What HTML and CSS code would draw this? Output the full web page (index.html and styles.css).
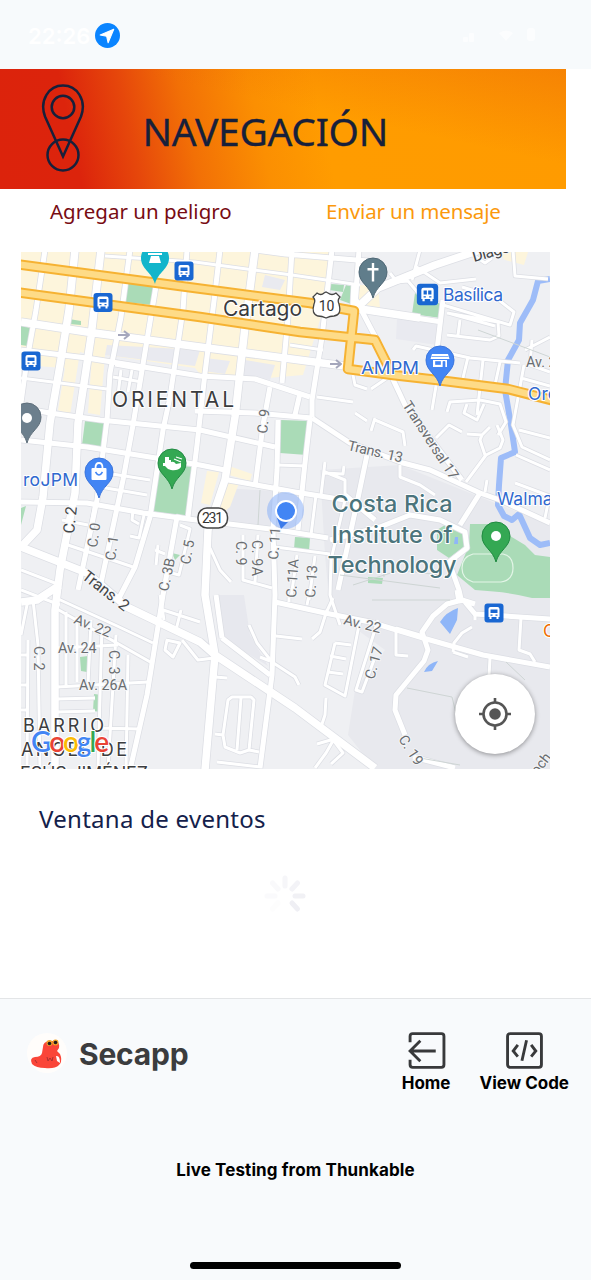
FILE: index.html
```html
<!DOCTYPE html>
<html lang="es">
<head>
<meta charset="utf-8">
<title>Secapp</title>
<link rel="stylesheet" href="styles.css">
</head>
<body>
<div class="app">
  <div class="status">
    <span class="time">22:26</span>
    <svg class="loc" viewBox="0 0 24 24"><circle cx="12" cy="12" r="12" fill="#0a84ff"/><path d="M18 6 5 11.600l6.200 1.200L12.600 19z" fill="#fff" stroke="#fff" stroke-linejoin="round"/></svg>
    <svg class="signals" viewBox="0 0 90 20" fill="#fff"><rect x="6" y="11" width="5" height="5" rx="1"/><rect x="12" y="7" width="5" height="9" rx="1"/><path d="M42 7q7-5 14 0l-7 8z"/><rect x="70" y="2" width="8" height="13" rx="3"/></svg>
  </div>
  <header class="hero">
    <svg class="route" viewBox="0 0 44 90" fill="none" stroke="#17203b" stroke-width="2.500"><path d="M22 73.500 4 33.500C-2 17 8 2.500 22 2.500S46 17 40 33.500z"/><circle cx="22" cy="24" r="11.300"/><circle cx="22" cy="72" r="15.500"/></svg>
    <h1 class="title">NAVEGACIÓN</h1>
  </header>
  <nav class="actions"><a class="danger">Agregar un peligro</a><a class="message">Enviar un mensaje</a></nav>

  <div class="map">
  <svg class="mapsvg" viewBox="21 252 529 517">
    <defs>
      <g id="minor">
        <path d="M21 378 107 389M105 256 195 262 292 275 360 285M87 470 150 480M100 487 147 495M115 365 143 370M113 377 142 382M121 370 118 395M132 370 128 392M290 345 323 350M277 465 306 466M275 547 330 554M345 500 345 480 325 472M325 462 321 495M325 473 343 474 344 466M316 495 311 535M345 500 331 560 330 595 340 625M353 375 355 385 367 389M317 397 353 402M355 413 367 421"/>
        <path d="M243 535 243 580 272 588M258 535 255 582M297 555 291 598M315 556 309 600M210 548 220 570 231 582M180 525 190 529 179 575 168 572M158 545 156 565M155 550 165 554M133 510 132 520 139 524M144 515 139 538 130 536M62 520 88 525M62 543 136 568M95 502 85 560"/>
        <path d="M21 590 60 605M21 570 60 585M28 600 21 635M33 600 38 645 40 769M28 640 27 769M21 655 28 655M21 685 28 685M21 710 28 710M56 598 115 625 153 643M57 609 152 663M57 648 118 645M57 687 148 682M57 699 95 698M57 712 95 711M100 728 140 729M66 612 66 685M77 617 77 682M91 620 88 685M102 625 98 769M116 635 108 769M128 655 126 769"/>
        <path d="M160 609 200 622M181 610 176 630M160 595 164 620M166 640 180 643 173 657 165 650 167 640M182 640 198 660 214 658M215 677 227 678M215 734 223 735 228 700 232 697 251 697 254 700 249 750 240 753 225 747 223 735M241 698 237 750M249 750 259 752M217 762 261 767"/>
        <path d="M276 636 302 639M249 625 257 643 272 662 295 677 299 685M260 657 270 661M327 610 320 632 312 639M333 598 326 613M335 643 351 645M335 643 325 685 345 696 360 620M330 656 346 659M328 672 343 674M326 698 325 715 320 730M378 620 356 690 362 692 374 660M317 744 334 739 326 753 315 768M334 741 343 753 331 764M289 602 289 597M307 605 309 595"/>
        <path d="M396 627 396 655 408 656M420 635 396 628M453 652 454 643 462 633 472 627M453 652 468 657M521 618 519 650 530 654 535 662M475 615 475 620M490 658 489 676"/>
        <path d="M390 273 397 282 408 281 424 300M415 266 440 283 476 279M470 253 485 263 492 258M513 250 515 276 548 279M443 305 510 325 514 312 495 297 462 287M448 313 495 326M447 335 490 340 499 336 498 322 447 313M460 320 458 335M420 250 412 280M413 350 416 346 470 358 520 363M468 357 462 382M483 360 477 415M500 362 495 385M437 380 432 410M447 412 450 402 480 400 500 404 506 422 498 435M467 404 464 413 477 420 484 404M532 340 530 365 550 372M525 350 550 337M524 365 513 425 522 447 550 460M521 378 550 386M519 430 550 438M516 455 550 470M371 389 399 370M375 420 403 432 405 446M371 431 375 418M436 438 449 425 462 432M467 434 482 435 490 427M497 425 503 440 500 448 486 455 466 482M485 455 480 440 482 435M487 480 485 492M515 483 550 496M549 498 545 518M400 465 400 477 420 485 435 495M550 400 530 397"/>
      </g>
      <g id="major">
        <path d="M45 250 36 310 27 360 20 410M130 250 121 317 110 373 107 420 97 500 78 590M157 280 147 340 133 425 123 480 101 583M187 250 183 310 170 397 163 430 150 517 135 567 118 600M220 250 215 293 205 373 197 445 188 517M292 250 288 317 282 383M270 387 263 425 255 487M332 250 322 337 312 400 312 417M300 393 295 415M310 420 305 463 298 530M359 250 355 305M255 250 285 254 380 262"/>
        <path d="M21 350 87 358 200 376 255 379 310 397M21 408 50 413 100 420 200 430 275 447M195 411 255 413 312 418M21 440 87 447 200 465 225 470M21 502 87 503 143 513 188 519 278 530 328 538M228 480 295 492 345 500M188 519 177 517 163 595 147 695 130 770M312 418 350 443 403 463 430 470 480 493 500 500 550 523M278 420 277 470 273 530 275 595 272 675 260 768M222 638 270 675M216 595 222 638M275 602 325 613 345 617 370 622 423 638 483 655 550 667M443 300 437 350M370 311 442 322M480 493 460 525M330 540 380 527 410 515 440 520 465 532 467 548 449 562 459 590 462 603M375 520 345 495M367 455 358 498 338 590M475 604 462 600 447 604 433 616 422 632 428 650 424 661 396 695 395 710 405 735M413 757 455 768M457 590 459 602M465 602 475 614 550 619M390 373 405 405 462 480M356 300 378 342"/>
      </g>
      <g id="arterial">
        <path d="M75 250 69 310 60 365 50 423 43 497 37 530 21 547M101 250 91 337 78 423 75 493 60 570 55 610 55 769M255 250 245 327 235 417 225 480 208 530 205 595 215 655 205 770M21 322 87 332 200 347 345 366M21 547 87 573 127 607 200 642 215 655 295 708 375 768M360 305 378 288 435 265 480 250M355 285 354 308 420 318M21 602 37 600 60 585"/>
      </g>
      <g id="highway"><path d="M15 264 195 288 310 303 354 311 348 369 393 375 437 380 508 389 555 401M15 292 200 317 300 332 375 340 392 374"/></g>
      <path id="pin" d="M0 26C-3 14-14 11-14 0a14 14 0 0 1 28 0C14 11 3 14 0 26z"/>
      <g id="bus"><rect x="-9.500" y="-9.500" width="19" height="19" rx="3" fill="#1967d2"/><path d="M-5.500-4q0-2 2-2h7q2 0 2 2v8h-1v2h-2v-2h-5v2h-2v-2h-1z" fill="#fff"/><path d="M-3.500-3.500h7v3.500h-7zM-3.500 1.500h2v1.200h-2zM1.500 1.500h2v1.200h-2z" fill="#1967d2"/></g>
    </defs>
    <rect x="21" y="252" width="529" height="517" fill="#eff0f3"/>
    <path d="M320 470 400 465 550 525V769H375L348 735 355 690 385 650 330 610 325 555z" fill="#e8e9ee"/>
    <path d="M222 488 276 491 274 530 217 522zM218 595 244 595 250 635 268 666 225 640z" fill="#e7e8ee"/>
    <path d="M21 252H330L320 320 303 375 268 378 203 378 195 368 105 355 100 415 88 413 92 355 80 352 70 415 58 410 65 368 21 365zM360 285 378 286 380 308 357 303zM207 471 219 472 210 505 201 503zM225 479 239 483 230 507 217 518zM229 466 252 474 250 481 229 475zM498 252H528L524 265 505 260z" fill="#fdf5dc"/>
    <path d="M107 345 200 350 195 366 105 355zM265 275 285 280 280 290 262 287zM205 358 230 361 225 374 203 371zM245 360 275 365 270 380 243 376zM397 318 440 324 437 345 396 339z" fill="#e9eaf0"/>
    <path d="M128 282 153 286 152 305 125 302zM69 319 81 321 81 325 69 324zM21 325 30 328 28 346 21 345zM85 421 105 422 102 449 82 445zM156 463 193 467 186 516 150 511zM281 420 310 421 307 455 280 453zM295 537 310 538 309 551 294 549zM331 284 344 285 343 292 329 290zM346 285 355 287 354 305 340 300zM415 293 443 305 441 318 412 314zM80 657 88 656 87 672 81 671zM94 694 102 695 101 712 93 711zM172 553 180 555 175 560zM21 508 26 506 21 525zM437 530 445 525 465 532 466 545 449 558 437 550zM470 524 490 524 525 545 535 555 550 557V598H532Q510 592 475 590L457 575 469 545zM368 577 383 578 382 584 368 583z" fill="#aadbb7"/>
    <path d="M550 279 538 281 533 300 520 323 519 340 508 360 505 390 511 425 515 452 501 458 499 485 498 505 504 516 512 520 519 514 530 538 540 545 550 543" fill="none" stroke="#9dbcf8" stroke-width="6" stroke-linejoin="round"/>
    <path d="M458 608 457 620 450 634 440 622Q446 612 458 608zM438 661 432 671 424 672Q428 663 438 661zM455 537h3v7h-4z" fill="#8fb6f8"/>
    <g fill="none" stroke-linejoin="round">
      <use href="#minor" stroke="#dcdee4" stroke-width="4.500"/><use href="#major" stroke="#dcdee4" stroke-width="6.500"/><use href="#arterial" stroke="#dcdee4" stroke-width="9"/>
      <use href="#minor" stroke="#fff" stroke-width="3"/><use href="#major" stroke="#fff" stroke-width="5"/><use href="#arterial" stroke="#fff" stroke-width="7.500"/>
      <use href="#highway" stroke="#f6b232" stroke-width="10.500"/><use href="#highway" stroke="#fedb87" stroke-width="6.500"/>
      <path d="M353 585 400 570 440 575M383 560 384 577M340 575 440 588M372 600H450M407 688 452 697 460 730M420 758 460 765M506 662 525 680M260 490 258 525M478 330 550 357" stroke="#ced5d4" stroke-width="1"/>
      <path d="M473 554h30q10 2 10 14t-12 14h-28q-11-3-11-14t11-14z" stroke="#e3f5e7" stroke-width="1.200"/>
      <path d="M118 335h10m-4-4 5 4-5 4M330 364h10m-4-4 5 4-5 4" stroke="#a5a7bc" stroke-width="2"/>
    </g>

    <use href="#bus" x="184" y="271"/><use href="#bus" x="103" y="302.500"/><use href="#bus" x="31" y="361"/><use href="#bus" x="494" y="613"/>
    <g transform="translate(427.500 294.500) scale(1.120)"><use href="#bus"/><path d="M-.6-4h1.200v5h-1.200z" fill="#fff"/></g>
    <g transform="translate(155 258)"><use href="#pin" fill="#12b5cb"/><path d="M-7-3h14v-2h-14zM-4-2h8l2 7h-12z" fill="#fff"/></g>
    <g transform="translate(373 272)"><use href="#pin" fill="#607d8b" stroke="#4f6876"/><path d="M-1.200-9h2.400v5h4.300v2.400h-4.300v11h-2.400v-11h-4.300v-2.400h4.300z" fill="#fff"/></g>
    <g transform="translate(440 360)"><use href="#pin" fill="#4285f4" stroke="#3b75dc"/><path d="M-8-6h16l1.500 5h-19zM-7 0h14v7h-14z" fill="#fff"/><path d="M-4.500 1.500h5v3h-5zM3 1.500h2v5.500h-2zM-8.500-3.500h17" stroke="#4285f4" fill="#4285f4" stroke-width=".7"/></g>
    <g transform="translate(27 417)"><use href="#pin" fill="#6c7f8d" stroke="#5f6f7b"/><circle r="5" cy="1" fill="#fff"/></g>
    <g transform="translate(99 472)"><use href="#pin" fill="#4285f4" stroke="#3b75dc"/><rect x="-7.500" y="-4" width="15" height="12" rx="1" fill="#fff"/><path d="M-3.500-4q0-5 3.500-5t3.500 5" fill="none" stroke="#fff" stroke-width="1.800"/><path d="M-3.500 0q3.500 6 7 0" fill="none" stroke="#4285f4" stroke-width="1.500"/></g>
    <g transform="translate(172 463)"><use href="#pin" fill="#34a853" stroke="#228b44"/><path d="M-7-6h4v3h2v2q3-1 5 2l5-1v4q-3 4-10 3-4-1-6-4h-2v-3h2z" fill="#fff"/><path d="m2-4 7 3m-5-5 6 2" stroke="#fff" stroke-width="1.200"/></g>
    <g transform="translate(496 536)"><use href="#pin" fill="#34a853" stroke="#1f8a40"/><circle r="5" fill="#fff"/></g>

    <g class="road">
      <text transform="translate(474 262) rotate(-16)" class="dark" textLength="58">Diagonal</text>
      <text transform="translate(267 434) rotate(-84)">C. 9</text>
      <text transform="translate(347 450) rotate(13)" textLength="56">Trans. 13</text>
      <text transform="translate(402 405) rotate(57)" textLength="90">Transversal 17</text>
      <text x="526" y="367">Av. 2</text>
      <text transform="translate(74 534) rotate(-84)" class="dark">C. 2</text>
      <text transform="translate(97 548) rotate(-82)">C. 0</text>
      <text transform="translate(115 561) rotate(-82)">C. 1</text>
      <text transform="translate(168 592) rotate(-78)">C. 3B</text>
      <text transform="translate(190 565) rotate(-80)">C. 5</text>
      <text transform="translate(236 541) rotate(90)">C. 9</text>
      <text transform="translate(252 540) rotate(90)" textLength="36">C. 9A</text>
      <text transform="translate(278 560) rotate(-86)">C. 11</text>
      <text transform="translate(296 598) rotate(-86)" textLength="39">C. 11A</text>
      <text transform="translate(315 598) rotate(-86)">C. 13</text>
      <text transform="translate(81 578) rotate(38)" class="dark" textLength="55">Trans. 2</text>
      <text transform="translate(73 623) rotate(22)">Av. 22</text>
      <text x="58" y="653">Av. 24</text>
      <text x="79" y="690" textLength="48">Av. 26A</text>
      <text transform="translate(34 646) rotate(90)">C. 2</text>
      <text transform="translate(109 650) rotate(90)">C. 3</text>
      <text transform="translate(343 624) rotate(14)" textLength="38">Av. 22</text>
      <text transform="translate(374 680) rotate(-74)">C. 17</text>
      <text transform="translate(398 739) rotate(57)">C. 19</text>
      <text transform="translate(532 783) rotate(-52)">Poch</text>
    </g>
    <g class="area"><text x="223" y="315.500" textLength="79" font-size="21">Cartago</text><text x="112" y="407" textLength="122" font-size="21">ORIENTAL</text><text x="23" y="732" textLength="81" font-size="18">BARRIO</text><text x="21" y="756" textLength="106" font-size="18">ANGEL DE</text><text x="10" y="780" textLength="138" font-size="18">JESÚS JIMÉNEZ</text></g>
    <g class="poi"><text x="443" y="301" textLength="60">Basílica</text><text x="361" y="374" textLength="58" lengthAdjust="spacingAndGlyphs">AMPM</text><text x="528" y="400">Oregano</text><text x="23" y="486" textLength="55">roJPM</text><text x="497" y="505">Walmart</text><text x="543" y="637" fill="#ef6c00">C</text></g>
    <g class="campus" text-anchor="middle"><text x="392" y="512" textLength="121">Costa Rica</text><text x="392" y="542.500" textLength="121">Institute of</text><text x="392" y="573" textLength="129">Technology</text></g>
    <path d="M317 293q4 3 7 0l2-1 2 1q4 3 8 0l4 4q-3 3-1 7 3 11-5 12-4 0-8 2-4-2-8-2-7-2-4-12 2-4-1-7z" fill="#fff" stroke="#444" stroke-width="1.300"/><text class="shield" x="326.500" y="311">10</text>
    <rect x="198" y="508" width="29.500" height="20" rx="9" fill="#fff" stroke="#444" stroke-width="1.500"/><text class="shield" x="212.500" y="523" textLength="21">231</text>
    <circle cx="285.500" cy="510.500" r="18.500" fill="#8ab0f8" opacity=".55"/><path d="M277 518 281 529 290 520z" fill="#3c7bea"/><circle cx="286" cy="511" r="11" fill="#fff"/><circle cx="286" cy="511" r="9" fill="#4285f4"/>
    <text class="google" x="31" y="752" textLength="78"><tspan fill="#4285f4">G</tspan><tspan fill="#ea4335">o</tspan><tspan fill="#fbbc05">o</tspan><tspan fill="#4285f4">g</tspan><tspan fill="#34a853">l</tspan><tspan fill="#ea4335">e</tspan></text>
  </svg>
  <button class="locate"><svg viewBox="0 0 32 32"><circle cx="16" cy="16" r="11.500" fill="none" stroke="#555" stroke-width="2.600"/><circle cx="16" cy="16" r="5.800" fill="#555"/><path d="M16 0v5m0 22v5M0 16h5m22 0h5" stroke="#555" stroke-width="2.600"/></svg></button>
  </div>

  <h2 class="events">Ventana de eventos</h2>
  <svg class="spinner" viewBox="-21 -21 42 42" stroke="#efeff4" stroke-width="5" stroke-linecap="round"><path d="M0-10V-18" opacity=".5"/><path d="M7-7 12.500-13" opacity=".7"/><path d="M10 0H18" opacity=".85"/><path d="M7 7 12.500 13"/><path d="M-7 7-12.500 13" opacity=".12"/><path d="M-10 0H-18" opacity=".25"/><path d="M-7-7-12.500-13" opacity=".35"/></svg>

  <footer class="footer">
    <div class="bar">
      <svg class="logo" viewBox="0 0 40 40"><circle cx="20" cy="20" r="20" fill="#fffdfb"/><path d="M5 31Q2 25 8 24q6 0 7-4l1-6q0-5 6-6h7q4 2 3 7l-2 3q3 2 4 6 1 5-2 8-4 4-14 3-9 0-13-4z" fill="#fa4538"/><circle cx="22.500" cy="10" r="3" fill="#efa129"/><circle cx="28.500" cy="9.500" r="3" fill="#efa129"/><circle cx="22.500" cy="10.500" r="1.800" fill="#231c1c"/><circle cx="28.500" cy="9.500" r="1.800" fill="#231c1c"/><path d="m20 24 1 4 2-3 2 3 1-4M8 27l2 3" stroke="#a93232" fill="none"/><path d="M29 23q4-1 4 7l-3-2z" fill="#fff"/></svg>
      <span class="name">Secapp</span>
      <a class="tool home"><svg viewBox="0 0 38 38" fill="none" stroke="#38393b" stroke-width="2.800"><path d="M3 11V5q0-2.500 2.500-2.500h28Q36 2.500 36 5v28q0 2.500-2.500 2.500h-28Q3 35.500 3 33v-5"/><path d="M28 19.500H3.500M13 9.500 3 19.500l10 10"/></svg>Home</a>
      <a class="tool code"><svg viewBox="0 0 38 38" fill="none" stroke="#38393b" stroke-width="2.800"><rect x="2.500" y="2.500" width="33" height="33" rx="2.500"/><path d="M12.500 13.500 8 19.500l4.500 5.500M25.500 13.500 30 19.500 25.500 25M21 9l-4.500 20"/></svg>View Code</a>
    </div>
    <p class="live">Live Testing from Thunkable</p>
    <div class="indicator"></div>
  </footer>
</div>
</body>
</html>
```
FILE: styles.css
```css
* { box-sizing: border-box; }
body { margin: 0; background: #fff; font-family: "Noto Sans", sans-serif; }
.app { width: 591px; height: 1280px; overflow: hidden; display: flex; flex-direction: column; }
.status { height: 69px; flex: none; background: #f7fafc; display: flex; align-items: center; padding: 2px 44px 0 28px; }
.time { font: 600 22px Inter, sans-serif; color: #fff; width: 67px; }
.loc { width: 25px; height: 25px; }
.signals { width: 90px; height: 20px; margin-left: auto; opacity: .7; }
.hero { width: 566px; height: 119.500px; flex: none; display: flex; padding-left: 41px; background:
  linear-gradient(12deg, transparent 60%, rgba(230, 90, 10, .5) 115%),
  linear-gradient(78deg, #dc230c 0%, #dc240c 14%, #e6470b 24%, #f27006 34%, #fb8f02 46%, #ff9c00 57%, #ff9b00 100%); }
.route { width: 44px; height: 90px; margin-top: 14px; }
.title { margin: 35px 0 0 57.500px; font-weight: 400; font-size: 39px; line-height: 54px; letter-spacing: -.3px; color: #17203b; -webkit-text-stroke: .3px #17203b; }
.actions { height: 63.500px; flex: none; display: flex; padding: 8px 0 0 50px; font-size: 20.500px; line-height: 28px; }
.danger { width: 276px; color: #780c13; }
.message { color: #fb990c; letter-spacing: -.15px; }
.map { position: relative; margin-left: 21px; width: 529px; height: 517px; flex: none; overflow: hidden; }
.mapsvg { display: block; width: 529px; height: 517px; }
.mapsvg text { font-family: Roboto, sans-serif; paint-order: stroke; stroke: #fff; stroke-width: 2px; stroke-linejoin: round; }
.road text { font-size: 14.300px; fill: #6a6d70; stroke: #f5f6f8; }
.road .dark { font-size: 15.800px; fill: #444648; }
.mapsvg .area text { font-family: Inter, sans-serif; fill: #3b3c3e; }
.mapsvg .poi text { font-family: Inter, sans-serif; font-size: 17.500px; fill: #3069cf; }
.mapsvg .poi text[fill] { fill: #ef6c00; }
.mapsvg .campus text { font-family: Inter, sans-serif; font-size: 23.500px; font-weight: 500; fill: #4b747c; }
.mapsvg .shield { font-size: 14px; text-anchor: middle; fill: #333; stroke: none; }
.mapsvg .google { font-family: Lato, sans-serif; font-size: 28px; font-weight: 600; stroke-width: 2px; }
.locate { position: absolute; left: 434px; top: 422px; width: 80px; height: 80px; border: 0; border-radius: 50%; padding: 24px; background: #fff; box-shadow: 0 1px 5px rgba(0, 0, 0, .4); }
.locate svg { display: block; width: 32px; height: 32px; }
.events { margin: 33px 0 0 39px; font-weight: 400; font-size: 24px; line-height: 34px; letter-spacing: .28px; color: #14214b; }
.spinner { width: 42px; height: 42px; flex: none; margin: 39px 0 0 264px; }
.footer { margin-top: auto; height: 282px; flex: none; border-top: 1.500px solid #e3e5e7; background: #f8fafc; display: flex; flex-direction: column; align-items: center; font-family: Inter, sans-serif; }
.bar { width: 591px; height: 100px; display: flex; padding: 32px 22px 0 27px; }
.logo { width: 40px; height: 40px; margin-top: 2px; }
.name { margin: 2px auto 0 12px; font-size: 30px; line-height: 42px; font-weight: 700; letter-spacing: -.2px; color: #3b3c3e; }
.tool { display: flex; flex-direction: column; align-items: center; font-size: 17px; line-height: 24px; font-weight: 700; color: #000; }
.tool svg { width: 39px; height: 39px; margin-bottom: 1px; }
.home { margin-right: 29px; }
.live { margin: 59px 0 0; font-size: 17px; line-height: 24px; font-weight: 700; letter-spacing: .1px; }
.indicator { width: 211px; height: 7px; border-radius: 4px; background: #000; margin: auto 0 11.500px; }
```
